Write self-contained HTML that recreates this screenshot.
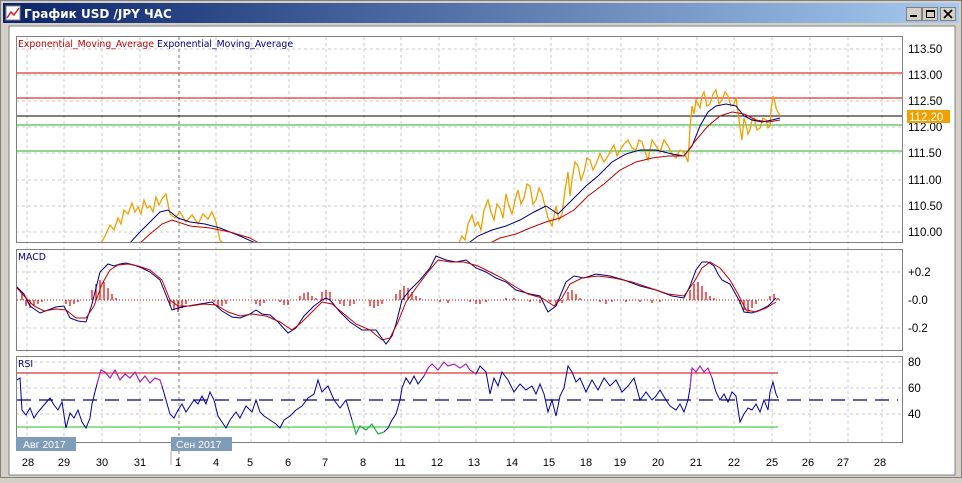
<!DOCTYPE html>
<html><head><meta charset="utf-8"><style>
body{margin:0;width:962px;height:478px;overflow:hidden;background:#d4d0c8;font-family:"Liberation Sans",sans-serif}
</style></head><body>
<svg width="962" height="478" xmlns="http://www.w3.org/2000/svg" font-family="Liberation Sans, DejaVu Sans, sans-serif">
<defs><linearGradient id="tb" x1="0" x2="1"><stop offset="0" stop-color="#0a246a"/><stop offset="1" stop-color="#a6caf0"/></linearGradient></defs>
<rect x="0" y="0" width="962" height="478" fill="#d4d0c8"/>
<rect x="0.5" y="0.5" width="961" height="477" fill="none" stroke="#808080"/>
<rect x="3" y="3" width="956" height="20" fill="url(#tb)"/>
<rect x="6" y="6" width="14" height="14" fill="#fff" stroke="#888"/>
<polyline points="7,18 11,12 14,15 19,8" fill="none" stroke="#d02020" stroke-width="1.5"/>
<text x="24" y="18" font-size="12" font-weight="bold" fill="#fff" font-family="DejaVu Sans, sans-serif">График USD /JPY  ЧАС</text>
<g stroke="#000" fill="#d4d0c8"><rect x="906.5" y="7.5" width="15" height="13" stroke="#808080"/><rect x="922.5" y="7.5" width="15" height="13" stroke="#808080"/><rect x="940.5" y="7.5" width="15" height="13" stroke="#808080"/></g>
<rect x="910" y="15" width="7" height="2" fill="#000"/>
<rect x="926.5" y="10.5" width="8" height="7" fill="none" stroke="#000"/><rect x="926" y="10" width="9" height="2" fill="#000"/>
<path d="M944 10 L952 18 M952 10 L944 18" stroke="#000" stroke-width="1.6"/>
<rect x="9" y="26" width="946" height="449" fill="#fff" stroke="#808080"/>
<g stroke="#c8c8c8" stroke-dasharray="3,3">
<path d="M27 37V443M64 37V443M102 37V443M140 37V443M216 37V443M251 37V443M289 37V443M326 37V443M364 37V443M401 37V443M439 37V443M476 37V443M514 37V443M551 37V443M588 37V443M621 37V443M658 37V443M697 37V443M734 37V443M772 37V443M810 37V443M848 37V443M882 37V443"/>
<path d="M16 49H902M16 75H902M16 101H902M16 127H902M16 153H902M16 180H902M16 206H902M16 232H902"/>
<path d="M16 272H902M16 328H902M16 362H902M16 388H902M16 414H902"/>
</g>
<path d="M179 37V465" stroke="#777" stroke-dasharray="3,3"/>
<g fill="none" stroke="#808080"><rect x="16.5" y="36.5" width="886" height="206"/><rect x="16.5" y="249.5" width="886" height="101"/><rect x="16.5" y="356.5" width="886" height="86"/></g>
<text x="18" y="47" font-size="9.3" fill="#c00000" font-family="DejaVu Sans, sans-serif">Exponential_Moving_Average <tspan fill="#000080">Exponential_Moving_Average</tspan></text>
<path d="M17 73H902M17 98H902" stroke="#d00000"/>
<path d="M17 116H902" stroke="#000"/>
<path d="M17 125H902M17 151H902" stroke="#20b020"/>
<g fill="#000" font-size="11.5"><text x="908" y="53">113.50</text><text x="908" y="79">113.00</text><text x="908" y="105">112.50</text><text x="908" y="131">112.00</text><text x="908" y="157">111.50</text><text x="908" y="184">111.00</text><text x="908" y="210">110.50</text><text x="908" y="236">110.00</text></g>
<rect x="907" y="110" width="43" height="13" fill="#f0a000"/><text x="909" y="121" font-size="11.5" fill="#fff">112.20</text>
<svg x="17" y="37" width="885" height="205" overflow="hidden"><g transform="translate(-17,-37)">
<polyline fill="none" stroke="#f0a000" stroke-width="1.3" points="100,245 105,236 110,225 114,230 118,218 121,224 124,210 128,214 132,203 135,212 138,207 141,214 144,200 147,208 150,206 153,212 156,197 159,205 162,199 166,194 170,214 175,218 180,212 186,222 192,215 198,224 203,214 208,219 212,212 216,222 220,240 224,245"/>
<polyline fill="none" stroke="#f0a000" stroke-width="1.3" points="458,245 462,236 465,240 468,224 472,215 475,226 478,222 481,230 484,210 488,200 491,212 494,220 497,204 500,208 503,218 506,194 509,206 512,214 515,200 518,190 521,204 524,198 527,184 530,186 533,204 536,200 539,188 542,194 545,206 548,218 552,226 556,206 559,220 562,214 565,190 568,172 570,196 572,180 575,162 578,166 581,180 584,172 587,158 590,160 593,170 596,164 600,154 604,162 608,156 611,150 614,145 617,156 620,150 624,144 628,140 632,148 636,150 639,140 642,142 645,152 648,160 652,140 656,146 660,152 664,140 668,146 672,154 676,158 680,150 684,152 688,162 690,128 692,106 694,114 696,100 700,108 702,96 704,92 707,106 710,104 713,94 716,90 719,104 722,100 725,92 728,96 731,106 734,104 736,98 738,112 740,128 742,140 744,118 746,124 748,134 750,130 752,120 754,118 757,130 760,128 763,118 766,120 768,128 770,126 771,110 773,96 775,102 776,108 778,112 780,116"/>
<polyline fill="none" stroke="#000080" points="128,245 140,232 150,222 160,212 168,210 178,218 190,222 205,224 220,228 240,236 262,246"/>
<polyline fill="none" stroke="#c00000" points="138,245 150,234 162,224 172,220 190,226 210,228 230,232 250,238 264,246"/>
<polyline fill="none" stroke="#000080" points="466,245 478,236 492,230 506,226 520,220 534,212 546,206 552,210 558,214 566,206 574,198 586,186 598,176 612,162 626,154 640,150 656,150 672,154 684,156 692,146 700,126 708,112 716,106 726,104 736,106 744,116 752,120 762,122 772,120 780,118"/>
<polyline fill="none" stroke="#c00000" points="486,245 500,238 516,234 530,228 546,222 560,218 574,210 588,196 604,184 620,170 636,162 652,158 668,156 684,156 696,140 708,126 720,116 732,112 744,114 756,120 768,122 780,120"/>
</g></svg>
<text x="18" y="260" font-size="9.3" fill="#000080" font-family="DejaVu Sans, sans-serif">MACD</text>
<g fill="#000" font-size="11.5"><text x="908" y="276">+0.2</text><text x="908" y="304">-0.0</text><text x="908" y="332">-0.2</text></g>
<path d="M17 300H780" stroke="#e00000" stroke-dasharray="1,2"/>
<g stroke="#e00000" stroke-width="1.2">
<path d="M22 300V292M26 300V306M30 300V308M34 300V306M38 300V304M42 300V302M66 300V304M70 300V306M74 300V304M78 300V302M92 300V290M96 300V284M100 300V280M104 300V282M108 300V288M112 300V294M116 300V298M170 300V306M174 300V310M178 300V312M182 300V308M186 300V304M214 300V302M218 300V306M222 300V306M226 300V304M256 300V304M260 300V306M264 300V303M280 300V302M284 300V305M288 300V305M300 300V296M304 300V293M308 300V292M312 300V296M316 300V298M322 300V292M326 300V290M330 300V292M340 300V304M344 300V306M350 300V306M354 300V304M370 300V306M374 300V308M378 300V306M382 300V304M396 300V294M400 300V290M404 300V286M408 300V288M412 300V292M416 300V296M420 300V298M440 300V302M448 300V303M470 300V302M476 300V304M480 300V304M486 300V302M506 300V298M514 300V298M530 300V302M540 300V303M550 300V302M556 300V306M562 300V303M568 300V292M572 300V290M576 300V294M580 300V298M600 300V302M606 300V304M612 300V302M626 300V302M640 300V302M652 300V303M660 300V302M690 300V290M694 300V284M698 300V282M702 300V286M706 300V292M710 300V296M714 300V298M740 300V304M744 300V310M748 300V312M752 300V308M756 300V304M770 300V296M774 300V294M778 300V298"/>
</g>
<polyline fill="none" stroke="#000080" points="17,287 24,294 30,306 40,313 48,310 56,307 64,306 70,318 78,321 86,322 92,304 100,272 108,264 114,266 120,264 126,263 134,265 142,268 150,272 160,280 166,295 172,310 178,308 188,306 200,304 212,302 222,311 232,317 240,318 250,314 256,310 262,314 270,315 278,322 288,333 296,328 304,316 314,306 322,300 326,298 330,300 340,312 350,322 362,330 376,330 386,344 392,336 396,324 402,300 410,290 420,280 430,268 436,256 446,260 456,262 466,260 476,268 486,272 496,278 506,282 516,290 530,294 540,296 548,312 556,306 566,282 574,276 584,278 596,274 610,276 624,280 640,286 656,290 672,296 684,298 690,286 696,270 702,262 708,262 714,266 718,274 722,280 730,284 740,302 744,312 752,313 760,310 768,306 776,298"/>
<polyline fill="none" stroke="#c00000" points="17,288 26,298 34,306 44,311 56,309 66,310 76,318 86,318 94,306 102,284 110,270 118,265 128,264 138,266 150,270 162,280 170,300 178,306 190,306 204,304 216,305 228,312 240,316 252,314 266,316 280,322 292,330 302,322 312,312 322,302 332,304 344,314 356,324 370,330 382,340 390,338 398,322 406,302 416,288 428,272 438,260 450,262 464,262 478,266 490,272 502,278 514,286 528,294 542,298 554,306 562,298 570,284 582,278 598,276 614,278 632,282 650,288 668,294 684,296 694,282 702,268 710,262 720,268 730,280 738,294 746,310 756,312 766,308 776,302"/>
<text x="18" y="367" font-size="9.3" fill="#000080" font-family="DejaVu Sans, sans-serif">RSI</text>
<g fill="#000" font-size="11.5"><text x="908" y="366">80</text><text x="908" y="392">60</text><text x="908" y="418">40</text></g>
<path d="M17 373H778" stroke="#d00000"/>
<path d="M17 427H778" stroke="#20c020"/>
<path d="M17 400H898" stroke="#000080" stroke-width="1.3" stroke-dasharray="14,8"/>
<polyline fill="none" stroke="#0000a0" points="17,380 20,378 22,410 26,415 30,408 34,418 38,412 44,405 50,398 54,405 58,410 62,402 66,428 70,413 74,418 78,410 82,422 86,428 90,418 92,404 94,396 97,384 101,370 105,372 110,378 115,370 120,380 125,374 130,378 135,372 140,382 145,376 150,383 155,378 160,380 162,386 166,400 170,414 174,418 178,410 182,404 186,412 190,406 194,400 198,404 202,396 206,404 210,392 214,400 218,416 222,422 226,428 230,420 236,412 240,418 246,406 252,412 256,400 260,412 264,416 270,420 276,424 280,428 284,420 290,416 296,410 302,406 308,398 314,394 318,380 322,392 328,386 334,400 340,408 346,400 352,420 356,434 360,426 366,430 372,424 378,434 384,432 388,428 392,420 396,414 400,400 402,388 406,378 410,384 414,376 418,384 424,376 428,368 432,364 438,370 444,362 448,366 454,364 460,368 466,364 470,370 476,374 480,366 486,372 490,394 494,378 498,386 502,372 508,380 514,392 520,384 526,390 532,386 536,394 540,384 544,394 548,412 552,400 556,416 560,396 564,388 568,366 572,372 576,382 580,378 586,392 592,380 598,390 604,378 610,386 616,380 622,392 628,386 634,378 640,400 646,392 652,400 656,396 660,390 666,400 670,406 676,410 680,404 684,412 688,400 690,388 692,368 696,372 700,366 704,372 708,368 712,378 716,392 720,400 724,394 728,402 732,392 736,396 740,422 744,414 748,408 752,410 756,404 760,412 764,400 768,410 770,392 773,382 776,394 778,398"/>
<polyline fill="none" stroke="#c020c0" points="97,384 101,370 105,372 110,378 115,370 120,380 125,374 130,378 135,372 140,382 145,376 150,383 155,378 160,380 162,386"/>
<polyline fill="none" stroke="#c020c0" points="424,376 428,368 432,364 438,370 444,362 448,366 454,364 460,368 466,364 470,370 476,374"/>
<polyline fill="none" stroke="#c020c0" points="690,388 692,368 696,372 700,366 704,372 708,368 712,378"/>
<polyline fill="none" stroke="#20c020" points="352,420 356,434 360,426 366,430 372,424 378,434 384,432"/>
<path d="M171 451V465" stroke="#aaa"/>
<rect x="16" y="437" width="60" height="14" fill="#7f9cb8"/><text x="23" y="448" font-size="10.5" fill="#fff">Авг 2017</text>
<rect x="171" y="437" width="61" height="14" fill="#7f9cb8"/><text x="176" y="448" font-size="10.5" fill="#fff">Сен 2017</text>
<g font-size="11" fill="#000" text-anchor="middle">
<text x="28" y="466">28</text><text x="64" y="466">29</text><text x="102" y="466">30</text><text x="140" y="466">31</text><text x="178" y="466">1</text><text x="216" y="466">4</text><text x="250" y="466">5</text><text x="288" y="466">6</text><text x="325" y="466">7</text><text x="363" y="466">8</text><text x="400" y="466">11</text><text x="437" y="466">12</text><text x="474" y="466">13</text><text x="512" y="466">14</text><text x="549" y="466">15</text><text x="586" y="466">18</text><text x="620" y="466">19</text><text x="658" y="466">20</text><text x="696" y="466">21</text><text x="734" y="466">22</text><text x="772" y="466">25</text><text x="808" y="466">26</text><text x="843" y="466">27</text><text x="880" y="466">28</text></g>
</svg>
</body></html>
